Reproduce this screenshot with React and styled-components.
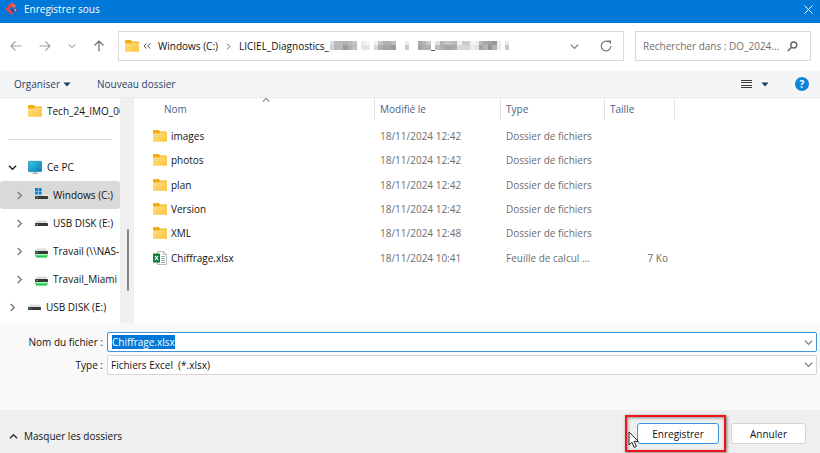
import React, { useEffect, useRef, useState } from "react";
import styled, { createGlobalStyle } from "styled-components";

const FILES = [
  { name: "images", date: "18/11/2024 12:42", type: "Dossier de fichiers", size: "" },
  { name: "photos", date: "18/11/2024 12:42", type: "Dossier de fichiers", size: "" },
  { name: "plan", date: "18/11/2024 12:42", type: "Dossier de fichiers", size: "" },
  { name: "Version", date: "18/11/2024 12:42", type: "Dossier de fichiers", size: "" },
  { name: "XML", date: "18/11/2024 12:48", type: "Dossier de fichiers", size: "" },
  { name: "Chiffrage.xlsx", date: "18/11/2024 10:41", type: "Feuille de calcul ...", size: "7 Ko", excel: true },
];

const DRIVES = [
  { label: "Windows (C:)", icon: "system", level: 1 },
  { label: "USB DISK (E:)", icon: "usb", level: 1 },
  { label: "Travail (\\\\NAS-", icon: "network", level: 1 },
  { label: "Travail_Miami", icon: "network", level: 1 },
  { label: "USB DISK (E:)", icon: "usb", level: 0 },
];

// [x, width, top color, bottom color] : masked part of the path
const MASK = [
  [0, 4, "#dcdcdc", "#d2d2d2"], [4, 9, "#bcbcbc", "#b8b8b8"], [13, 5, "#b4b4b4", "#9c9c9c"],
  [18, 4, "#bababa", "#b2b2b2"], [22, 5, "#c4c4c4", "#bebebe"],
  [31, 4, "#ececec", "#e6e6e6"], [35, 5, "#f6f6f6", "#e4e4e4"],
  [44, 4, "#f0f0f0", "#d6d6d6"], [48, 5, "#c4c4c4", "#b0b0b0"], [53, 8, "#b2b2b2", "#a6a6a6"],
  [61, 5, "#bcbcbc", "#9a9a9a"],
  [75, 4, "#ececec", "#cacaca"],
  [88, 4, "#acacac", "#a2a2a2"], [92, 4, "#b6b6b6", "#b0b0b0"], [96, 5, "#cacaca", "#b2b2b2"],
  [105, 5, "#e2e2e2", "#bcbcbc"], [110, 4, "#b4b4b4", "#b0b0b0"], [114, 9, "#c2c2c2", "#a6a6a6"],
  [123, 4, "#b8b8b8", "#aeaeae"], [127, 5, "#f2f2f2", "#dadada"],
  [132, 8, "#cccccc", "#d6d6d6"], [140, 5, "#f2f2f2", "#ececec"],
  [145, 4, "#f0f0f0", "#e4e4e4"], [149, 4, "#b6b6b6", "#a4a4a4"], [153, 5, "#a8a8a8", "#b6b6b6"],
  [158, 4, "#a0a0a0", "#949494"], [162, 5, "#989898", "#b0b0b0"], [167, 4, "#eeeeee", "#ececec"],
  [175, 4, "#ebebeb", "#c8c8c8"],
];

const Chevron = ({ dir = "down", size = 9, color = "#7a7a7a", width = 1.3 }) => {
  const paths = {
    down: "M1 3 L5 7 L9 3",
    up: "M1 7 L5 3 L9 7",
    right: "M3 1 L7 5 L3 9",
  };
  return (
    <svg width={size} height={size} viewBox="0 0 10 10" aria-hidden="true">
      <path d={paths[dir]} fill="none" stroke={color} strokeWidth={width} />
    </svg>
  );
};

const Arrow = ({ turn = 0, color = "#a3a3a3" }) => (
  <svg width="12" height="12" viewBox="0 0 12 12" aria-hidden="true">
    <path
      d="M11.5 6 H1 M5.5 1.5 L1 6 L5.5 10.5"
      fill="none"
      stroke={color}
      strokeWidth="1.2"
      transform={`rotate(${turn} 6 6)`}
    />
  </svg>
);

const Caret = () => (
  <svg width="8" height="5" viewBox="0 0 8 5" aria-hidden="true">
    <path d="M0.5 0.5 H7.5 L4 4.5 Z" fill="#1d3a63" />
  </svg>
);

const FolderIcon = () => (
  <svg width="14" height="12" viewBox="0 0 14 12" aria-hidden="true">
    <defs>
      <linearGradient id="folder" x1="0" y1="0" x2="1" y2="1">
        <stop offset="0" stopColor="#ffe08a" />
        <stop offset="1" stopColor="#fbc33a" />
      </linearGradient>
    </defs>
    <path d="M0 1 Q0 0 1 0 H5.2 Q5.8 0 6.2 0.6 L7 1.6 H13 Q14 1.6 14 2.6 V6 H0 Z" fill="#f3ac12" />
    <path d="M0 3.6 H5.6 Q6.2 3.6 6.6 3.1 L7.4 2.4 H13 Q14 2.4 14 3.4 V10.8 Q14 11.8 13 11.8 H1 Q0 11.8 0 10.8 Z" fill="url(#folder)" />
  </svg>
);

const ExcelIcon = () => (
  <svg width="14" height="14" viewBox="0 0 14 14" aria-hidden="true">
    <path d="M4.5 0.5 H10.5 L13.5 3.5 V13.5 H4.5 Z" fill="#fff" stroke="#a9a9a9" strokeWidth="0.8" />
    <path d="M10.5 0.5 V3.5 H13.5" fill="none" stroke="#a9a9a9" strokeWidth="0.8" />
    <path d="M8 5.5 H12 M8 7.5 H12 M8 9.5 H12 M8 11.5 H12" stroke="#8fbfa4" strokeWidth="1" />
    <rect x="0" y="2.5" width="7" height="9" fill="#107c41" />
    <path d="M2 5 L5 9 M5 5 L2 9" stroke="#fff" strokeWidth="1.2" />
  </svg>
);

const PcIcon = () => (
  <svg width="14" height="14" viewBox="0 0 14 14" aria-hidden="true">
    <defs>
      <linearGradient id="screen" x1="0" y1="0" x2="1" y2="1">
        <stop offset="0" stopColor="#35cfe0" />
        <stop offset="1" stopColor="#0d78b8" />
      </linearGradient>
    </defs>
    <rect x="0.4" y="1.4" width="13.2" height="10.2" rx="0.8" fill="url(#screen)" stroke="#1b7ea6" strokeWidth="0.8" />
    <path d="M5.5 12 H8.5 V13 H10 V14 H4 V13 H5.5 Z" fill="#a9b4bc" />
  </svg>
);

const DriveIcon = ({ kind }) => (
  <svg width="13" height="14" viewBox="0 0 13 14" aria-hidden="true">
    {kind === "system" && (
      <path d="M0 0 H3 V3 H0 Z M3.6 0 H6.6 V3 H3.6 Z M0 3.6 H3 V6.6 H0 Z M3.6 3.6 H6.6 V6.6 H3.6 Z" fill="#0a84dc" />
    )}
    {kind === "system" && <path d="M7.5 6 H11 L13 8 H7.5 Z" fill="#e9e9e9" />}
    {kind !== "system" && <path d="M2 4.5 H11 L13 7 H0 Z" fill="#dcdcdc" />}
    <rect x="0" y={kind === "system" ? 8 : 7} width="13" height="3" rx="0.4" fill="#383838" />
    <rect x="1.5" y={kind === "system" ? 9 : 8} width="1.5" height="1" fill="#49d66a" />
    {kind === "network" && (
      <>
        <rect x="0" y="10.6" width="13" height="1.8" fill="#4be070" />
        <rect x="1" y="12" width="11" height="1.6" fill="#2fc455" />
      </>
    )}
  </svg>
);

const AppLogo = () => (
  <svg width="14" height="14" viewBox="0 0 14 14" aria-hidden="true">
    <path d="M6.5 0.3 L11 4 L8.8 6 L6.8 4.4 L4.2 7 L8 11.2 L6.5 13.6 L0.3 7 Z" fill="#ee3f45" />
    <path d="M6.5 0.3 L11 4 L8.8 6 L6.8 4.4 Z" fill="#f4655f" />
    <path d="M11 5.4 L13.6 8 L9.8 11.8 L8 9.8 Z" fill="#4a5fa2" />
    <path d="M8.2 6.2 L10 8 L8.2 9.8 L6.4 8 Z" fill="#2b3f86" />
    <path d="M9.8 6.6 L11.4 8 L10.2 9.2 L8.8 8 Z" fill="#d9a6b4" />
  </svg>
);

const MaskedPath = () => (
  <svg width="180" height="12" viewBox="0 0 180 12" aria-hidden="true">
    {MASK.map(([x, w, top, bottom]) => (
      <g key={x}>
        <rect x={x} y="1" width={w} height="4" fill={top} />
        <rect x={x} y="5" width={w} height="5" fill={bottom} />
      </g>
    ))}
    <rect x="101" y="10" width="4" height="1" fill="#555" />
  </svg>
);

const App = () => {
  const [fileName, setFileName] = useState("Chiffrage.xlsx");
  const [selected, setSelected] = useState(0);
  const inputRef = useRef(null);

  // the name is selected when the dialog opens
  useEffect(() => {
    inputRef.current.focus();
    inputRef.current.select();
  }, []);

  return (
    <>
      <GlobalStyle />
      <Dialog>
        <TitleBar>
          <AppLogo />
          <Title>Enregistrer sous</Title>
          <IconButton aria-label="Fermer">
            <svg width="9" height="9" viewBox="0 0 9 9" aria-hidden="true">
              <path d="M0.5 0.5 L8.5 8.5 M8.5 0.5 L0.5 8.5" stroke="#fff" strokeWidth="1" />
            </svg>
          </IconButton>
        </TitleBar>

        <NavBar>
          <NavButtons>
            <IconButton aria-label="Précédent"><Arrow /></IconButton>
            <IconButton aria-label="Suivant"><Arrow turn={180} /></IconButton>
            <IconButton aria-label="Emplacements récents"><Chevron size={8} color="#a3a3a3" /></IconButton>
            <IconButton aria-label="Dossier parent"><Arrow turn={90} color="#6d6d6d" /></IconButton>
          </NavButtons>
          <AddressBar>
            <FolderIcon />
            <Crumbs>
              <svg width="8" height="8" viewBox="0 0 8 8" aria-hidden="true">
                <path d="M3.5 1.5 L1 4 L3.5 6.5 M7.2 1.5 L4.7 4 L7.2 6.5" fill="none" stroke="#555" />
              </svg>
              <Crumb href="#c">Windows (C:)</Crumb>
              <Chevron dir="right" size={7} color="#555" />
              <PathEnd>
                <Crumb href="#liciel">LICIEL_Diagnostics_</Crumb>
                <MaskedPath />
              </PathEnd>
            </Crumbs>
            <IconButton aria-label="Historique"><Chevron size={9} /></IconButton>
            <IconButton aria-label="Actualiser">
              <svg width="12" height="12" viewBox="0 0 12 12" aria-hidden="true">
                <path d="M10.8 6 A4.8 4.8 0 1 1 8.6 2" fill="none" stroke="#777" strokeWidth="1.2" />
                <path d="M7.4 0.6 H11 V4.2 Z" fill="#777" />
              </svg>
            </IconButton>
          </AddressBar>
          <SearchBox>
            <SearchInput type="text" aria-label="Rechercher" placeholder="Rechercher dans : DO_2024..." />
            <svg width="11" height="11" viewBox="0 0 11 11" aria-hidden="true">
              <circle cx="6.8" cy="4" r="3" fill="none" stroke="#666" strokeWidth="1.4" />
              <path d="M4.6 6.2 L0.8 10" stroke="#666" strokeWidth="1.6" />
            </svg>
          </SearchBox>
        </NavBar>

        <Toolbar>
          <ToolButton>Organiser <Caret /></ToolButton>
          <ToolButton>Nouveau dossier</ToolButton>
          <ToolRight>
            <IconButton aria-label="Affichage">
              <svg width="11" height="10" viewBox="0 0 11 10" aria-hidden="true">
                <path d="M0 1.5 H11 M0 3.5 H11 M0 6.5 H11 M0 8.5 H11" stroke="#3c3c3c" strokeWidth="1" />
              </svg>
            </IconButton>
            <IconButton aria-label="Autres options"><Caret /></IconButton>
            <HelpButton aria-label="Aide">?</HelpButton>
          </ToolRight>
        </Toolbar>

        <Body>
          <Sidebar>
            <Tree>
              <TreeItem $level={0}>
                <Twisty />
                <FolderIcon />
                <TreeLabel>Tech_24_IMO_00</TreeLabel>
              </TreeItem>
              <Separator />
              <TreeItem $level={0}>
                <Twisty><Chevron size={9} color="#222" width={1.6} /></Twisty>
                <PcIcon />
                <TreeLabel>Ce PC</TreeLabel>
              </TreeItem>
              {DRIVES.map((drive, i) => (
                <TreeItem
                  key={i}
                  $level={drive.level}
                  $active={selected === i}
                  onClick={() => setSelected(i)}
                >
                  <Twisty><Chevron dir="right" size={9} color="#7a7a7a" width={1.5} /></Twisty>
                  <DriveIcon kind={drive.icon} />
                  <TreeLabel>{drive.label}</TreeLabel>
                </TreeItem>
              ))}
            </Tree>
            <ScrollTrack><ScrollThumb /></ScrollTrack>
          </Sidebar>

          <FileArea>
            <FileTable>
              <colgroup>
                <NameCol />
                <DateCol />
                <TypeCol />
                <SizeCol />
                <col />
              </colgroup>
              <thead>
                <tr>
                  <Th $first>
                    Nom
                    <SortMark><Chevron dir="up" size={8} /></SortMark>
                  </Th>
                  <Th>Modifié le</Th>
                  <Th>Type</Th>
                  <Th>Taille</Th>
                  <Th as="td" />
                </tr>
              </thead>
              <tbody>
                {FILES.map((file) => (
                  <tr key={file.name}>
                    <Td $dark>
                      <FileName>
                        {file.excel ? <ExcelIcon /> : <FolderIcon />}
                        {file.name}
                      </FileName>
                    </Td>
                    <Td>{file.date}</Td>
                    <Td>{file.type}</Td>
                    <Td $right>{file.size}</Td>
                    <Td />
                  </tr>
                ))}
              </tbody>
            </FileTable>
          </FileArea>
        </Body>

        <Form>
          <Label htmlFor="name">Nom du fichier :</Label>
          <Field $focus>
            <NameInput
              id="name"
              ref={inputRef}
              type="text"
              spellCheck={false}
              value={fileName}
              onChange={(e) => setFileName(e.target.value)}
            />
            <Chevron size={9} />
          </Field>
          <Label htmlFor="type">Type :</Label>
          <Field>
            <TypeSelect id="type">
              <option>Fichiers Excel&nbsp; (*.xlsx)</option>
            </TypeSelect>
            <Chevron size={9} />
          </Field>
        </Form>

        <Footer>
          <HideButton>
            <Chevron dir="up" size={9} color="#333" width={1.6} />
            Masquer les dossiers
          </HideButton>
          <Highlighted>
            <Button $primary>Enregistrer</Button>
            <RedFrame />
            <Pointer width="12" height="18" viewBox="0 0 12 18" aria-hidden="true">
              <path
                d="M1 1 V14 L4 11.2 L6.2 16.4 L8.4 15.4 L6.2 10.4 H10.4 Z"
                fill="#fff"
                stroke="#222"
                strokeWidth="1"
              />
            </Pointer>
          </Highlighted>
          <Button>Annuler</Button>
        </Footer>
      </Dialog>
    </>
  );
};

export default App;

const GlobalStyle = createGlobalStyle`
  * {
    box-sizing: border-box;
  }

  body {
    margin: 0;
    background-color: #efefef;
    font-family: "Open Sans", "Noto Sans", sans-serif;
    font-size: 10px;
    line-height: 14px;
    color: #111;
  }

  button, input, select {
    font: inherit;
    color: inherit;
  }

  svg {
    flex-shrink: 0;
  }
`;

const Dialog = styled.main`
  display: flex;
  flex-direction: column;
  min-height: 100vh;
`;

const IconButton = styled.button`
  display: flex;
  align-items: center;
  justify-content: center;
  padding: 0;
  border: none;
  background: none;
`;

const TitleBar = styled.header`
  display: flex;
  align-items: center;
  gap: 5px;
  height: 23px;
  padding: 0 7px 5px 5px;
  background-color: #0078d7;
  color: white;
`;

const Title = styled.h1`
  flex: 1;
  margin: 0;
  font-size: 10px;
  font-weight: 400;
`;

const NavBar = styled.nav`
  display: flex;
  align-items: center;
  height: 48px;
  padding: 0 9px 2px;
  background-color: white;
`;

const NavButtons = styled.div`
  display: flex;
  align-items: center;
  gap: 17px;
  width: 109px;
  padding-left: 1px;
`;

const AddressBar = styled.div`
  display: flex;
  flex: 1;
  align-items: center;
  gap: 21px;
  height: 30px;
  padding: 0 11px 0 6px;
  border: 1px solid #d9d9d9;
`;

const Crumbs = styled.div`
  display: flex;
  flex: 1;
  align-items: center;
  gap: 7px;
  margin-left: -17px;
`;

const Crumb = styled.a`
  color: inherit;
  text-decoration: none;
`;

const PathEnd = styled.span`
  display: flex;
  align-items: center;
  gap: 1px;
`;

const SearchBox = styled.div`
  display: flex;
  align-items: center;
  width: 176px;
  height: 30px;
  margin-left: 11px;
  padding: 0 12px 0 7px;
  border: 1px solid #d9d9d9;
`;

const SearchInput = styled.input`
  flex: 1;
  min-width: 0;
  padding: 0;
  border: none;
  outline: none;
  background: none;

  &::placeholder {
    color: #6f6f6f;
    opacity: 1;
  }
`;

const Toolbar = styled.div`
  display: flex;
  align-items: center;
  gap: 26px;
  height: 27px;
  padding: 0 11px 0 14px;
  border-bottom: 1px solid #e8eaec;
  background-color: #f4f5f7;
`;

const ToolButton = styled.button`
  display: flex;
  align-items: center;
  gap: 3px;
  padding: 0;
  border: none;
  background: none;
  color: #2b3f63;
`;

const ToolRight = styled.div`
  display: flex;
  align-items: center;
  gap: 9px;
  margin-left: auto;
`;

const HelpButton = styled.button`
  width: 14px;
  height: 14px;
  margin-left: 17px;
  padding: 0;
  border: none;
  border-radius: 50%;
  background-color: #0f84d8;
  color: white;
  font-weight: 700;
  line-height: 14px;
`;

const Body = styled.div`
  display: flex;
  height: 225px;
  background-color: white;
`;

const Sidebar = styled.aside`
  display: flex;
  width: 134px;
`;

const Tree = styled.ul`
  flex: 1;
  min-width: 0;
  margin: -1px 0 0;
  padding: 0;
  list-style: none;
`;

const TreeItem = styled.li`
  display: flex;
  align-items: center;
  height: 28px;
  padding-left: ${(props) => (props.$level ? "15px" : "8px")};
  border-radius: 3px;
  background-color: ${(props) => (props.$active ? "#d9d9d9" : "transparent")};
`;

const Twisty = styled.span`
  display: flex;
  width: 20px;
`;

const TreeLabel = styled.span`
  flex: 1;
  overflow: hidden;
  margin-left: 5px;
  white-space: nowrap;
`;

const Separator = styled.li`
  height: 28px;
  padding: 14px 8px 0;

  &::after {
    content: "";
    display: block;
    border-top: 1px solid #dcdcdc;
  }
`;

const ScrollTrack = styled.div`
  width: 14px;
  padding: 131px 5px 0 7px;
  background-color: #efefef;
`;

const ScrollThumb = styled.div`
  height: 62px;
  border-radius: 1px;
  background-color: #858585;
`;

const FileArea = styled.section`
  flex: 1;
`;

const FileTable = styled.table`
  width: 100%;
  height: 172px;
  table-layout: fixed;
  border-collapse: collapse;
`;

const NameCol = styled.col`
  width: 240px;
`;

const DateCol = styled.col`
  width: 126px;
`;

const TypeCol = styled.col`
  width: 104px;
`;

const SizeCol = styled.col`
  width: 70px;
`;

const Th = styled.th`
  position: relative;
  height: 26px;
  padding: 0 0 4px ${(props) => (props.$first ? "30px" : "6px")};
  background: ${(props) =>
    props.$first ? "none" : "linear-gradient(#e4e4e4, #e4e4e4) no-repeat left top / 1px 22px"};
  color: #4a5f86;
  font-weight: 400;
  text-align: left;
`;

const SortMark = styled.span`
  position: absolute;
  top: -5px;
  left: 128px;
`;

const Td = styled.td`
  padding: 0 6px;
  color: ${(props) => (props.$dark ? "#111" : "#6d6d6d")};
  text-align: ${(props) => (props.$right ? "right" : "left")};
  white-space: nowrap;
`;

const FileName = styled.span`
  display: flex;
  align-items: center;
  gap: 4px;
  padding-left: 13px;
`;

const Form = styled.form`
  display: grid;
  grid-template-columns: 100px 1fr;
  align-items: center;
  gap: 2px 4px;
  height: 87px;
  padding: 9px 3px 35px;
  background-color: #f9f9f9;
`;

const Label = styled.label`
  text-align: right;
`;

const Field = styled.div`
  display: flex;
  align-items: center;
  height: 20px;
  padding-right: 3px;
  border: 1px solid ${(props) => (props.$focus ? "#3d96dd" : "#d6d6d6")};
  border-radius: 2px;
  background-color: white;
`;

const NameInput = styled.input`
  flex: 1;
  min-width: 0;
  height: 16px;
  padding: 0 4px;
  border: none;
  outline: none;
  background: none;

  &::selection {
    background-color: #0078d7;
    color: white;
  }
`;

const TypeSelect = styled.select`
  flex: 1;
  padding: 0 3px;
  border: none;
  outline: none;
  background: none;
  appearance: none;
`;

const Footer = styled.footer`
  display: flex;
  flex: 1;
  align-items: center;
  gap: 12px;
  min-height: 43px;
  padding: 4px 14px 0 9px;
  background-color: #efefef;
`;

const HideButton = styled.button`
  display: flex;
  align-items: center;
  gap: 6px;
  margin-right: auto;
  padding: 5px 0 0;
  border: none;
  background: none;
`;

const Highlighted = styled.div`
  position: relative;
`;

const Button = styled.button`
  display: block;
  width: ${(props) => (props.$primary ? "82px" : "75px")};
  height: 21px;
  padding: 0;
  border: 1px solid ${(props) => (props.$primary ? "#3d96dd" : "#d3d3d3")};
  border-radius: 3px;
  background-color: white;
`;

const RedFrame = styled.span`
  position: absolute;
  inset: -8px -7px -8px -12px;
  border: 2px solid #f0141a;
  box-shadow: 1px 1px 3px rgba(0, 0, 0, 0.5), inset 1px 1px 3px rgba(0, 0, 0, 0.4);
  pointer-events: none;
`;

const Pointer = styled.svg`
  position: absolute;
  top: 8px;
  left: -9px;
`;
